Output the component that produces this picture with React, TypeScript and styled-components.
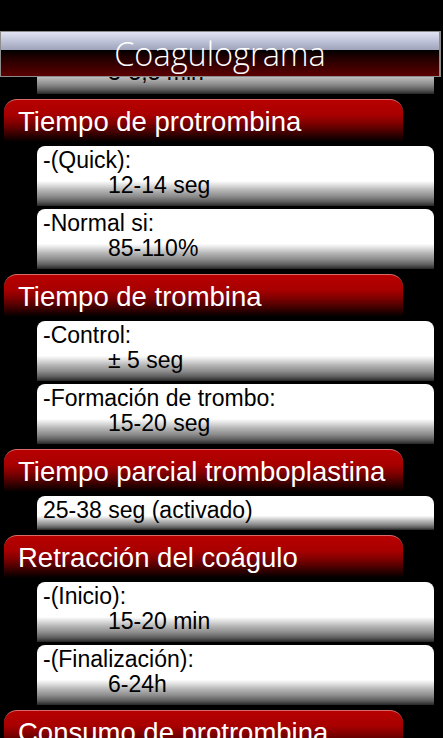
import React from "react";
import styled, { createGlobalStyle } from "styled-components";

type Entry = { label?: string; value: string };
type Section = { title: string; entries: Entry[] };

const sections: Section[] = [
  {
    title: "Tiempo de protrombina",
    entries: [
      { label: "-(Quick):", value: "12-14 seg" },
      { label: "-Normal si:", value: "85-110%" },
    ],
  },
  {
    title: "Tiempo de trombina",
    entries: [
      { label: "-Control:", value: "± 5 seg" },
      { label: "-Formación de trombo:", value: "15-20 seg" },
    ],
  },
  {
    title: "Tiempo parcial tromboplastina",
    entries: [{ value: "25-38 seg (activado)" }],
  },
  {
    title: "Retracción del coágulo",
    entries: [
      { label: "-(Inicio):", value: "15-20 min" },
      { label: "-(Finalización):", value: "6-24h" },
    ],
  },
  {
    title: "Consumo de protrombina",
    entries: [],
  },
];

export default function App() {
  return (
    <>
      <GlobalStyle />
      <Screen>
        <TitleBar>
          <Title>Coagulograma</Title>
        </TitleBar>
        <List>
          {/* previous entry, scrolled mostly under the title bar */}
          <CutCard>
            <Value>3-5,5 min</Value>
          </CutCard>
          {sections.map((s) => (
            <Group key={s.title}>
              <GroupHeader>{s.title}</GroupHeader>
              <Cards>
                {s.entries.map((e, i) => (
                  <Card key={i} $single={!e.label}>
                    {e.label ? (
                      <>
                        <Label>{e.label}</Label>
                        <Value>{e.value}</Value>
                      </>
                    ) : (
                      <Label>{e.value}</Label>
                    )}
                  </Card>
                ))}
              </Cards>
            </Group>
          ))}
        </List>
      </Screen>
    </>
  );
}

const GlobalStyle = createGlobalStyle`
  body {
    margin: 0;
    background: #000;
    font-family: "Liberation Sans", Arial, sans-serif;
  }
`;

const Screen = styled.div`
  width: 443px;
  height: 738px;
  overflow: hidden;
  padding-top: 31px;
  box-sizing: border-box;
  background: #000;
`;

const TitleBar = styled.header`
  position: relative;
  z-index: 1;
  width: 441px;
  height: 46px;
  box-sizing: border-box;
  border: 1px solid #8c8c8c;
  border-right-width: 2px;
  background: linear-gradient(
    to bottom,
    #e2e4f4 0%,
    #b8bcd2 25%,
    #a0a4bc 40%,
    #000 41%,
    #1c0000 55%,
    #5c0000 100%
  );
  display: flex;
  align-items: center;
  justify-content: center;
`;

const Title = styled.h1`
  margin: 0;
  font-family: "Open Sans", "Liberation Sans", sans-serif;
  font-weight: 300;
  font-size: 32.5px;
  line-height: 44px;
  color: #fff;
`;

const List = styled.div`
  display: flex;
  flex-direction: column;
  gap: 5px;
`;

const Group = styled.section`
  display: flex;
  flex-direction: column;
  gap: 4px;
`;

const GroupHeader = styled.h2`
  margin: 0 0 0 4px;
  width: 399px;
  height: 43px;
  box-sizing: border-box;
  padding: 1px 0 0 14px;
  border-radius: 13px 13px 0 0;
  border-top: 1px solid #d86a6a;
  background: linear-gradient(
    to bottom,
    #b80000 0%,
    #a80000 35%,
    #800000 55%,
    #3a0000 80%,
    #000 100%
  );
  color: #fff;
  font-weight: 400;
  font-size: 27.5px;
  line-height: 41px;
  white-space: nowrap;
`;

const Cards = styled.div`
  display: flex;
  flex-direction: column;
  gap: 3px;
`;

const Card = styled.div<{ $single?: boolean }>`
  margin-left: 37px;
  width: 397px;
  height: ${(p) => (p.$single ? 34 : 60)}px;
  box-sizing: border-box;
  padding: 2px 0 0 6px;
  border-radius: 8px 8px 0 0;
  background: linear-gradient(
    to bottom,
    #fff 0%,
    #fff 58%,
    #e4e4e4 64%,
    #b4b4b4 74%,
    #8c8c8c 84%,
    #5c5c5c 93%,
    #262626 100%
  );
  display: flex;
  flex-direction: column;
`;

const CutCard = styled(Card)`
  margin-top: -43px;
  justify-content: flex-end;
  padding-bottom: 9px;
`;

const Label = styled.div`
  font-size: 23px;
  line-height: 25px;
  color: #000;
  white-space: nowrap;
`;

const Value = styled(Label)`
  margin-left: 65px;
`;
